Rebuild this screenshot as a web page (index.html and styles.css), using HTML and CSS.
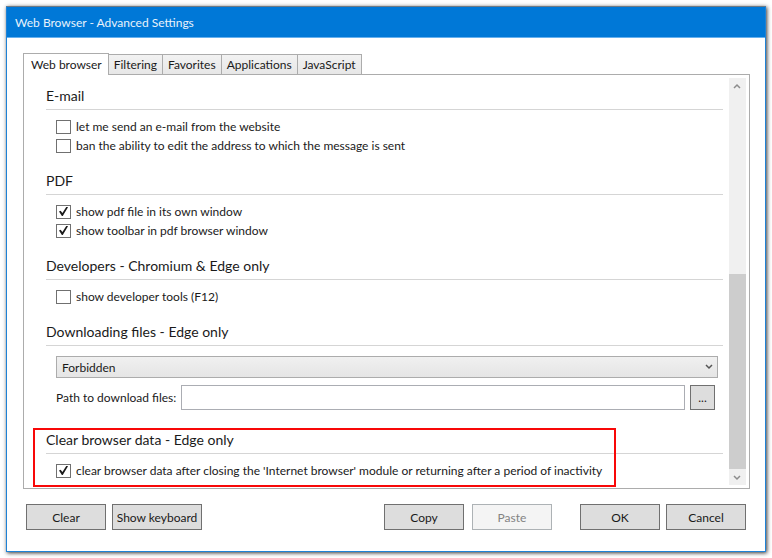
FILE: index.html
```html
<!DOCTYPE html>
<html lang="en">
<head>
  <meta charset="UTF-8">
  <meta name="viewport" content="width=device-width, initial-scale=1.0">
  <title>Web Browser - Advanced Settings</title>
  <link rel="stylesheet" href="styles.css">
</head>
<body>
  <form class="dialog">
    <h1 class="title-bar">Web Browser - Advanced Settings</h1>

    <div class="dialog-body">
      <div class="tabs" role="tablist">
        <button type="button" class="tab active" role="tab" aria-selected="true">Web browser</button>
        <button type="button" class="tab" role="tab">Filtering</button>
        <button type="button" class="tab" role="tab">Favorites</button>
        <button type="button" class="tab" role="tab">Applications</button>
        <button type="button" class="tab" role="tab">JavaScript</button>
      </div>

      <div class="panel" role="tabpanel">
        <div class="settings">
          <section class="group">
            <h2>E-mail</h2>
            <div class="group-body">
              <label class="check"><input type="checkbox">let me send an e-mail from the website</label>
              <label class="check"><input type="checkbox">ban the ability to edit the address to which the message is sent</label>
            </div>
          </section>

          <section class="group">
            <h2>PDF</h2>
            <div class="group-body">
              <label class="check"><input type="checkbox" checked>show pdf file in its own window</label>
              <label class="check"><input type="checkbox" checked>show toolbar in pdf browser window</label>
            </div>
          </section>

          <section class="group">
            <h2>Developers - Chromium &amp; Edge only</h2>
            <div class="group-body">
              <label class="check"><input type="checkbox">show developer tools (F12)</label>
            </div>
          </section>

          <section class="group">
            <h2>Downloading files - Edge only</h2>
            <div class="group-body downloads">
              <div class="select-box">
                <select aria-label="Downloading files">
                  <option>Forbidden</option>
                  <option>Allowed</option>
                </select>
                <svg class="select-arrow" width="8" height="6" viewBox="0 0 8 6"><path d="M1 1l3 3 3-3" fill="none" stroke="#555" stroke-width="1.5"/></svg>
              </div>
              <div class="path-row">
                <label for="path">Path to download files:</label>
                <input type="text" id="path">
                <button type="button" class="btn browse">...</button>
              </div>
            </div>
          </section>

          <section class="group marked">
            <h2>Clear browser data - Edge only</h2>
            <div class="group-body">
              <label class="check"><input type="checkbox" checked>clear browser data after closing the 'Internet browser' module or returning after a period of inactivity</label>
            </div>
          </section>
        </div>

        <div class="scrollbar">
          <svg width="16" height="16" viewBox="0 0 16 16"><path d="M5 10l3-3 3 3" fill="none" stroke="#8c8c8c" stroke-width="1.5"/></svg>
          <div class="track"><div class="thumb"></div></div>
          <svg width="16" height="16" viewBox="0 0 16 16"><path d="M5 7l3 3 3-3" fill="none" stroke="#8c8c8c" stroke-width="1.5"/></svg>
        </div>
      </div>

      <div class="buttons">
        <button type="button" class="btn">Clear</button>
        <button type="button" class="btn wide">Show keyboard</button>
        <div class="clipboard">
          <button type="button" class="btn">Copy</button>
          <button type="button" class="btn" disabled>Paste</button>
        </div>
        <div class="confirm">
          <button type="submit" class="btn">OK</button>
          <button type="button" class="btn">Cancel</button>
        </div>
      </div>
    </div>
  </form>
</body>
</html>
```

FILE: styles.css
```css
* { margin: 0; padding: 0; box-sizing: border-box; }
body {
  padding: 6px;
  background: #fff;
  color: #1a1a1a;
}
body, button, input, select {
  font-family: "Segoe UI", Lato, sans-serif;
  font-size: 12px;
}

.dialog {
  border: 1px solid #1e82d6;
  border-top-color: #6c7a86;
  background: #fff;
  box-shadow: 1px 1px 4px rgba(0, 0, 0, 0.8);
}
.title-bar {
  height: 31px;
  padding-left: 8px;
  border-bottom: 1px solid #66b0ee;
  background: #0078d7;
  color: #e8f2fb;
  font-size: 12px;
  font-weight: normal;
  line-height: 31px;
}
.dialog-body { padding: 15px 15px 21px 16px; }

/* Tabs */
.tabs { display: flex; align-items: flex-end; }
.tab {
  height: 20px;
  padding: 0 5px;
  border: 1px solid #acacac;
  border-left: 0;
  border-bottom: 0;
  background: linear-gradient(#f2f2f2, #e7e7e7);
  color: #1a1a1a;
  line-height: 20px;
}
.tab.active {
  position: relative;
  height: 22px;
  margin-bottom: -1px;
  padding: 0 6px 0 7px;
  border-left: 1px solid #acacac;
  background: #fff;
}

.panel {
  display: flex;
  padding: 3px;
  border: 1px solid #acacac;
}
.settings {
  flex: 1;
  min-width: 0;
  padding: 8px 6px 5px 19px;
}

/* Setting groups */
.group { position: relative; margin-bottom: 16px; }
.group:last-child { margin-bottom: 0; }
.group h2 {
  height: 24px;
  border-bottom: 1px solid #d5d5d5;
  font-size: 14px;
  font-weight: normal;
  line-height: 20px;
}
.group-body { padding: 7px 5px 0 10px; }
.check {
  display: flex;
  align-items: center;
  gap: 5px;
  height: 19px;
}
.check input {
  flex: none;
  appearance: none;
  width: 15px;
  height: 14px;
  border: 1px solid #707070;
  background: #fff;
}
.check input:checked::before {
  content: "";
  display: block;
  width: 9px;
  height: 10px;
  margin: 1px 2px;
  background: #1a1a1a;
  clip-path: polygon(0 50%, 18% 42%, 38% 66%, 84% 0, 100% 8%, 42% 96%, 32% 96%);
}

.downloads { padding-top: 10px; padding-bottom: 4px; }
.select-box { position: relative; margin-bottom: 7px; }
.select-box select {
  display: block;
  appearance: none;
  width: 100%;
  height: 22px;
  padding: 0 5px;
  border: 1px solid #acacac;
  border-radius: 0;
  background: linear-gradient(#f0f0f0, #e5e5e5);
  color: #1a1a1a;
}
.select-arrow { position: absolute; top: 8px; right: 5px; }
.path-row {
  display: flex;
  align-items: center;
  gap: 5px;
  padding-right: 3px;
}
.path-row input {
  flex: 1;
  min-width: 0;
  height: 25px;
  padding: 0 4px;
  border: 1px solid #abadb3;
}

/* Red frame around the last group */
.marked::after {
  content: "";
  position: absolute;
  top: -2px;
  right: 107px;
  bottom: -7px;
  left: -13px;
  border: 2px solid #f80808;
  pointer-events: none;
}

.scrollbar {
  display: flex;
  flex-direction: column;
  width: 17px;
  background: #f0f0f0;
}
.track {
  flex: 1;
  display: flex;
  flex-direction: column;
  justify-content: flex-end;
}
.thumb { height: 52%; background: #cdcdcd; }

/* Buttons */
.btn {
  width: 80px;
  height: 26px;
  border: 1px solid #707070;
  background: #ddd;
  color: #1a1a1a;
}
.btn.wide { width: 90px; }
.btn.browse { width: 25px; height: 25px; }
.btn:disabled {
  border-color: #adb2b5;
  background: #f4f4f4;
  color: #838383;
}
.buttons {
  display: flex;
  gap: 6px;
  padding: 15px 4px 0 3px;
}
.clipboard { display: flex; gap: 8px; margin-left: auto; }
.confirm { display: flex; gap: 6px; margin-left: 22px; }
```
